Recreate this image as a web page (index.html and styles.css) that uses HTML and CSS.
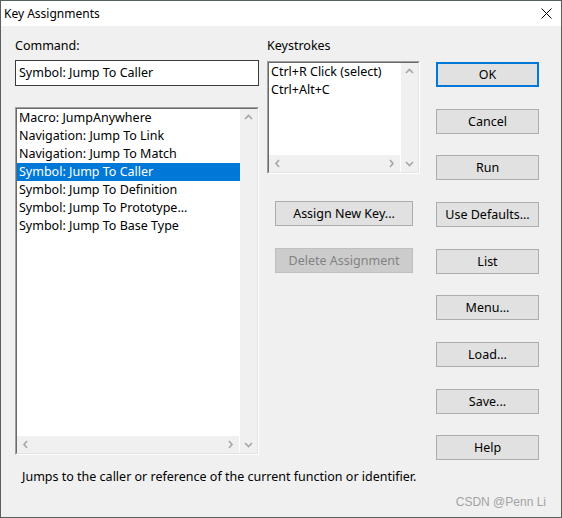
FILE: index.html
```html
<!DOCTYPE html>
<html>
<head>
<meta charset="utf-8">
<link rel="stylesheet" href="styles.css">
</head>
<body>
<div class="window">
  <div class="titlebar">
    <span class="title">Key Assignments</span>
    <svg class="close" width="11" height="11" viewBox="0 0 11 11"><path d="M0.5 0.5 L10.5 10.5 M10.5 0.5 L0.5 10.5" stroke="#000" stroke-width="1" fill="none"/></svg>
  </div>
  <div class="content">
    <div class="col-left">
      <div class="label">Command:</div>
      <div class="cmd-input">Symbol: Jump To Caller</div>
      <div class="lb list-cmd">
        <div class="lb-inner">
          <div class="lb-main">
            <div class="lb-items">
              <div class="row">Macro: JumpAnywhere</div>
              <div class="row">Navigation: Jump To Link</div>
              <div class="row">Navigation: Jump To Match</div>
              <div class="row selected">Symbol: Jump To Caller</div>
              <div class="row">Symbol: Jump To Definition</div>
              <div class="row">Symbol: Jump To Prototype...</div>
              <div class="row">Symbol: Jump To Base Type</div>
            </div>
            <div class="hscroll">
              <svg class="arr" width="17" height="17" viewBox="0 0 17 17"><polyline points="10,5 7,8.5 10,12" fill="none" stroke="#a6a6a6" stroke-width="1.6"/></svg>
              <svg class="arr" width="17" height="17" viewBox="0 0 17 17"><polyline points="7,5 10,8.5 7,12" fill="none" stroke="#a6a6a6" stroke-width="1.6"/></svg>
            </div>
          </div>
          <div class="vscroll">
            <svg class="arr" width="17" height="17" viewBox="0 0 17 17"><polyline points="5,10 8.5,6.5 12,10" fill="none" stroke="#a6a6a6" stroke-width="1.6"/></svg>
            <svg class="arr" width="17" height="17" viewBox="0 0 17 17"><polyline points="5,7 8.5,10.5 12,7" fill="none" stroke="#a6a6a6" stroke-width="1.6"/></svg>
          </div>
        </div>
      </div>
    </div>
    <div class="col-mid">
      <div class="label">Keystrokes</div>
      <div class="lb list-keys">
        <div class="lb-inner">
          <div class="lb-main">
            <div class="lb-items">
              <div class="row">Ctrl+R Click (select)</div>
              <div class="row">Ctrl+Alt+C</div>
            </div>
            <div class="hscroll">
              <svg class="arr" width="17" height="17" viewBox="0 0 17 17"><polyline points="10,5 7,8.5 10,12" fill="none" stroke="#a6a6a6" stroke-width="1.6"/></svg>
              <svg class="arr" width="17" height="17" viewBox="0 0 17 17"><polyline points="7,5 10,8.5 7,12" fill="none" stroke="#a6a6a6" stroke-width="1.6"/></svg>
            </div>
          </div>
          <div class="vscroll">
            <svg class="arr" width="17" height="17" viewBox="0 0 17 17"><polyline points="5,10 8.5,6.5 12,10" fill="none" stroke="#a6a6a6" stroke-width="1.6"/></svg>
            <svg class="arr" width="17" height="17" viewBox="0 0 17 17"><polyline points="5,7 8.5,10.5 12,7" fill="none" stroke="#a6a6a6" stroke-width="1.6"/></svg>
          </div>
        </div>
      </div>
      <div class="btn btn-wide btn-assign">Assign New Key...</div>
      <div class="btn btn-wide btn-delete disabled">Delete Assignment</div>
    </div>
    <div class="col-right">
      <div class="btn default">OK</div>
      <div class="btn">Cancel</div>
      <div class="btn">Run</div>
      <div class="btn">Use Defaults...</div>
      <div class="btn">List</div>
      <div class="btn">Menu...</div>
      <div class="btn">Load...</div>
      <div class="btn">Save...</div>
      <div class="btn">Help</div>
    </div>
  </div>
  <div class="desc">Jumps to the caller or reference of the current function or identifier.</div>
  <div class="watermark">CSDN @Penn Li</div>
</div>
</body>
</html>
```
FILE: styles.css
```css
body {
  margin: 0;
  font-family: "Noto Sans", "DejaVu Sans", sans-serif;
  font-size: 12.5px;
  color: #000;
}

.window {
  position: relative;
  width: 562px;
  height: 518px;
  box-sizing: border-box;
  border: 1px solid #55615a;
  background: #f0f0f0;
}

.titlebar {
  height: 25px;
  background: #fff;
  display: flex;
  align-items: center;
  justify-content: space-between;
  padding-left: 3px;
  padding-right: 9px;
}

.title {
  font-size: 12px;
  line-height: 25px;
}

.close {
  display: block;
}

.content {
  display: flex;
  align-items: flex-start;
  padding-left: 14px;
}

.label {
  height: 16px;
  line-height: 16px;
}

.col-left {
  width: 244px;
  margin-top: 12px;
}

.cmd-input {
  margin-top: 6px;
  height: 26px;
  box-sizing: border-box;
  border: 1px solid #3a3a3a;
  background: #fff;
  padding-left: 3px;
  line-height: 24px;
}

.lb {
  box-sizing: border-box;
  border: 1px solid;
  border-color: #a0a0a0 #ffffff #ffffff #a0a0a0;
}

.lb-inner {
  height: 100%;
  box-sizing: border-box;
  border: 1px solid;
  border-color: #696969 #e3e3e3 #e3e3e3 #696969;
  display: flex;
  background: #fff;
}

.lb-main {
  flex: 1;
  display: flex;
  flex-direction: column;
  min-width: 0;
}

.lb-items {
  flex: 1;
  background: #fff;
}

.row {
  height: 18px;
  line-height: 18px;
  padding-left: 2px;
  white-space: nowrap;
}

.row.selected {
  background: #0078d7;
  color: #fff;
}

.hscroll {
  height: 17px;
  background: #f0f0f0;
  display: flex;
  justify-content: space-between;
  margin-right: 1px;
}

.vscroll {
  width: 17px;
  background: #f0f0f0;
  display: flex;
  flex-direction: column;
  justify-content: space-between;
}

.arr {
  display: block;
}

.list-cmd {
  margin-top: 21px;
  height: 348px;
}

.col-mid {
  width: 153px;
  margin-left: 8px;
  margin-top: 12px;
}

.list-keys {
  margin-top: 7px;
  height: 113px;
}

.btn {
  height: 25px;
  box-sizing: border-box;
  border: 1px solid #adadad;
  background: #e1e1e1;
  text-align: center;
  line-height: 23px;
}

.btn.default {
  border: 2px solid #0078d7;
  line-height: 21px;
}

.btn-wide {
  margin-left: 8px;
  width: 138px;
}

.btn-assign {
  margin-top: 27px;
}

.btn-delete {
  margin-top: 22px;
}

.btn.disabled {
  background: #cccccc;
  border-color: #bfbfbf;
  color: #838383;
}

.col-right {
  width: 103px;
  margin-left: 16px;
  margin-top: 36px;
  display: flex;
  flex-direction: column;
  gap: 21.67px;
}

.desc {
  margin-top: 9px;
  padding-left: 21px;
  line-height: 16px;
}

.watermark {
  position: absolute;
  right: 15px;
  bottom: 7px;
  font-family: "Liberation Sans", Arial, sans-serif;
  font-size: 12px;
  line-height: 16px;
  color: #a3a3a3;
}
```
